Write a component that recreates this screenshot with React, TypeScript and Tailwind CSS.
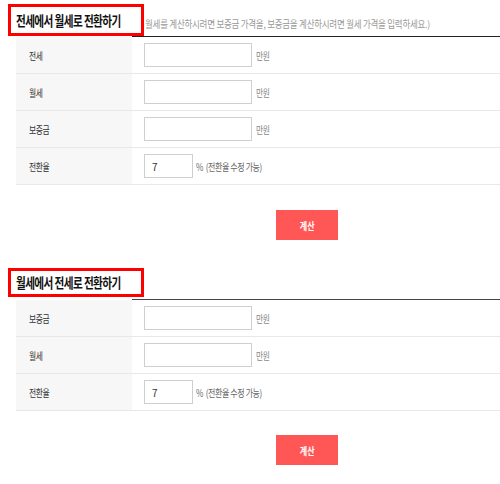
import React from "react";

const font = { fontFamily: '"Noto Sans CJK KR", "Noto Sans", sans-serif' };

function Title({ text, h }: { text: string; h: string }) {
  return (
    <div
      className={`ml-2 w-[136px] ${h} shrink-0 border-[3px] border-[#ff0000] flex items-center pl-[5px] whitespace-nowrap`}
    >
      <span className="inline-block origin-left scale-x-[0.76] text-[14px] font-bold tracking-[-0.8px] text-[#111]">
        {text}
      </span>
    </div>
  );
}

function Row({ label, children }: { label: string; children: React.ReactNode }) {
  return (
    <div className="flex h-[37px] border-b border-[#e8e8e8]">
      <div className="w-[116px] shrink-0 bg-[#f7f7f7] flex items-center pl-[13px]">
        <span className="inline-block origin-left scale-x-[0.78] text-[10px] tracking-[-0.5px] text-[#333]">
          {label}
        </span>
      </div>
      <div className="flex-1 flex items-center pl-3 whitespace-nowrap">{children}</div>
    </div>
  );
}

function Money() {
  return (
    <>
      <input
        readOnly
        className="w-[108px] h-6 border border-[#cfcfcf] bg-white outline-none"
      />
      <span className="ml-1 inline-block origin-left scale-x-[0.78] text-[10px] tracking-[-0.5px] text-[#888]">
        만원
      </span>
    </>
  );
}

function Rate() {
  return (
    <>
      <input
        readOnly
        defaultValue="7"
        className="w-[49px] h-6 border border-[#cfcfcf] bg-white pl-[7px] text-[10px] text-[#333] outline-none"
      />
      <span className="ml-[3px] inline-block origin-left scale-x-[0.8] text-[10px] tracking-[-0.5px] text-[#666]">
        % &nbsp;(전환율 수정 가능)
      </span>
    </>
  );
}

function CalcButton() {
  return (
    <button className="ml-[276px] w-[62px] h-[30px] bg-[#ff5656] flex items-center justify-center">
      <span className="inline-block scale-x-[0.8] text-[10px] font-bold text-white">계산</span>
    </button>
  );
}

export default function App() {
  return (
    <div className="w-[500px] h-[484px] overflow-hidden bg-white" style={font}>
      {/* 전세 -> 월세 */}
      <section className="pt-1">
        <div className="flex items-center">
          <Title text="전세에서 월세로 전환하기" h="h-[32px]" />
          <span className="ml-px mt-1.5 inline-block origin-left scale-x-[0.85] whitespace-nowrap text-[10px] tracking-[-0.3px] text-[#999]">
            월세를 계산하시려면 보증금 가격을, 보증금을 계산하시려면 월세 가격을 입력하세요.)
          </span>
        </div>
        <div className="ml-4">
          <div className="ml-[116px] h-px bg-[#222]" />
          <Row label="전세">
            <Money />
          </Row>
          <Row label="월세">
            <Money />
          </Row>
          <Row label="보증금">
            <Money />
          </Row>
          <Row label="전환율">
            <Rate />
          </Row>
        </div>
        <div className="mt-[25px]">
          <CalcButton />
        </div>
      </section>

      {/* 월세 -> 전세 */}
      <section className="mt-[28px]">
        <Title text="월세에서 전세로 전환하기" h="h-[29px]" />
        <div className="ml-4 mt-[2px]">
          <div className="ml-[116px] h-px bg-[#444]" />
          <Row label="보증금">
            <Money />
          </Row>
          <Row label="월세">
            <Money />
          </Row>
          <Row label="전환율">
            <Rate />
          </Row>
        </div>
        <div className="mt-[24px]">
          <CalcButton />
        </div>
      </section>
    </div>
  );
}
